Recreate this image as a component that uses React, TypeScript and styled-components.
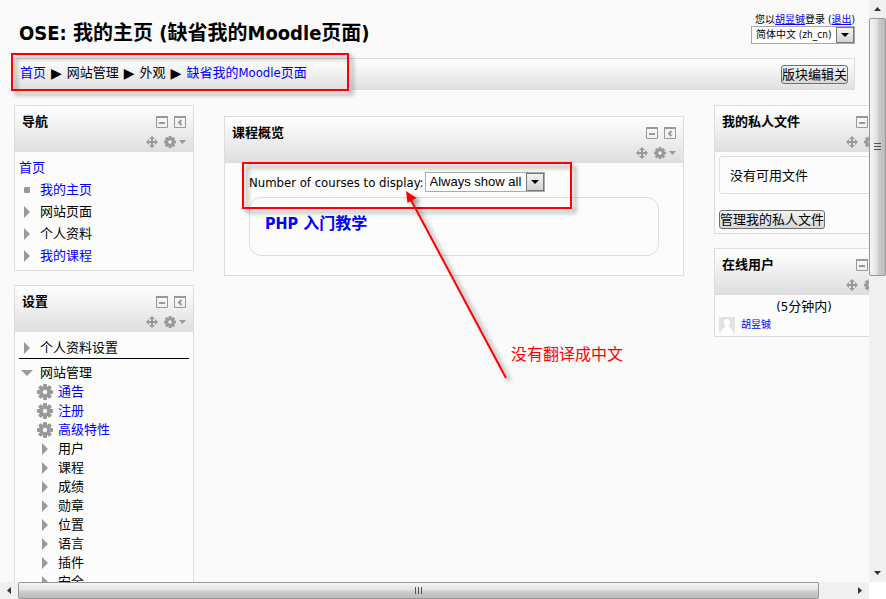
import React from "react";
import styled, { createGlobalStyle } from "styled-components";

const GlobalStyle = createGlobalStyle`
  * { box-sizing: border-box; }
  body { margin: 0; overflow: hidden; }
  body, button, select {
    font-family: "DejaVu Sans Condensed", "Noto Sans CJK SC", sans-serif;
    font-size: 13px;
    color: #000;
  }
  h1, h2, h3, p, ul { margin: 0; padding: 0; }
  ul { list-style: none; }
  svg { display: block; flex: none; }
`;

const LINK = "#0000ff";
const LINE = "#dddddd";
const ICON = "#999999";
const RED = "#ff0000";

const Frame = styled.div`
  display: grid;
  grid-template-columns: minmax(0, 1fr) 17px;
  grid-template-rows: minmax(0, 1fr) 17px;
  height: 100vh;
  background: #fff;
`;

const Viewport = styled.div`
  position: relative;
  overflow: hidden;
  background: #fafafa;
`;

const Page = styled.div`
  padding: 14px 14px 0;
`;

const Header = styled.header`
  display: flex;
  justify-content: space-between;
  align-items: flex-start;
  height: 44px;
`;

const Title = styled.h1`
  padding: 5px 0 0 5px;
  font-size: 20px;
  line-height: 28px;
  white-space: nowrap;
`;

const Account = styled.div`
  display: flex;
  flex-direction: column;
  align-items: flex-end;
  font-size: 10px;
  line-height: 12px;
`;

const Link = styled.a<{ $plain?: boolean }>`
  color: ${LINK};
  text-decoration: ${(p) => (p.$plain ? "none" : "underline")};
`;

const SelectShell = styled.span<{ $small?: boolean }>`
  display: grid;
  grid-template-columns: minmax(0, 1fr) 18px;
  width: ${(p) => (p.$small ? "104px" : "120px")};
  height: ${(p) => (p.$small ? "18px" : "20px")};
  border: 1px solid #aaa;
  background: #fff;
`;

const Select = styled.select<{ $small?: boolean }>`
  grid-area: 1 / 1 / 2 / 3;
  appearance: none;
  width: 100%;
  height: 100%;
  border: 0;
  padding: 0 0 0 4px;
  outline: 0;
  background: transparent;
  font-family: ${(p) =>
    p.$small
      ? `"DejaVu Sans Condensed", "Noto Sans CJK SC", sans-serif`
      : `"Liberation Sans", sans-serif`};
  font-size: ${(p) => (p.$small ? "10px" : "13px")};
  line-height: 16px;
`;

const SelectArrow = styled.span`
  grid-area: 1 / 2 / 2 / 3;
  display: flex;
  align-items: center;
  justify-content: center;
  border: 1px solid #777;
  background: linear-gradient(#f4f4f4, #d4d4d4);
  pointer-events: none;
`;

const NavBar = styled.nav`
  display: flex;
  align-items: center;
  justify-content: space-between;
  height: 32px;
  padding: 0 6px 0 5px;
  border: 1px solid ${LINE};
  background: linear-gradient(#fff, #e0e0e0);
`;

const Crumbs = styled.div`
  display: flex;
  align-items: center;
  gap: 5px;
  line-height: 26px;
  padding-bottom: 2px;
  white-space: nowrap;
`;

const CrumbArrow = styled.span`
  font-family: "DejaVu Sans", sans-serif;
  font-size: 14px;
`;

const Button = styled.button`
  height: 19px;
  padding: 0;
  border: 1px solid #707070;
  border-radius: 3px;
  background: linear-gradient(#f3f3f3, #d8d8d8);
  line-height: 17px;
`;

const Columns = styled.div`
  display: flex;
  align-items: flex-start;
  gap: 30px;
  margin: 15px -39px 0 0;
`;

const Side = styled.aside`
  flex: 0 0 180px;
  display: flex;
  flex-direction: column;
  gap: 14px;
`;

const Main = styled.main`
  flex: 1;
  min-width: 0;
  padding-top: 11px;
`;

const BlockBox = styled.section`
  border: 1px solid ${LINE};
  background: #fcfcfc;
`;

const BlockHead = styled.div`
  display: grid;
  grid-template-columns: 1fr auto;
  grid-template-rows: 20px 20px;
  align-items: center;
  height: 46px;
  padding: 6px 7px 0;
  background: linear-gradient(#fff, #dedede);
`;

const BlockTitle = styled.h2`
  font-size: 13px;
  line-height: 20px;
`;

const IconRow = styled.div`
  display: flex;
  align-items: center;
  justify-content: flex-end;
  gap: 6px;
  grid-column: 2;
`;

const BlockBody = styled.div`
  padding: 4px;
`;

const Tree = styled.ul<{ $tight?: boolean }>`
  line-height: ${(p) => (p.$tight ? "19px" : "22px")};
`;

const NavTree = styled(Tree)`
  padding-top: 1px;
  margin-bottom: -1px;
`;

const TreeRow = styled.li<{ $level?: number }>`
  display: flex;
  align-items: center;
  padding-left: ${(p) => (p.$level === 2 ? "18px" : "0")};
`;

const Marker = styled.span<{ $level?: number }>`
  display: flex;
  justify-content: center;
  flex: none;
  width: ${(p) => (p.$level === 2 ? "16px" : "16px")};
  margin-right: 5px;
`;

const Rule = styled.hr`
  height: 1px;
  margin: 0 0 4px;
  border: 0;
  background: #000;
`;

const Overview = styled.div`
  padding: 9px 24px 19px;
`;

const DisplayCount = styled.label`
  display: flex;
  align-items: center;
  gap: 1px;
  height: 20px;
  white-space: nowrap;
`;

const Course = styled.div`
  height: 59px;
  margin-top: 5px;
  padding: 14px 15px;
  border: 1px solid ${LINE};
  border-radius: 12px;
`;

const CourseTitle = styled.h3`
  font-size: 16px;
  line-height: 24px;
`;

const FileBox = styled.div`
  height: 38px;
  margin-bottom: 16px;
  padding: 0 10px;
  border: 1px solid ${LINE};
  border-radius: 3px;
  line-height: 38px;
`;

const OnlineBody = styled.div`
  padding: 3px 4px;
`;

const Since = styled.p`
  line-height: 18px;
  text-align: center;
`;

const User = styled.div`
  display: flex;
  align-items: center;
  gap: 6px;
  height: 17px;
  font-size: 10px;
  line-height: 16px;
`;

const Track = styled.div<{ $vertical?: boolean }>`
  display: flex;
  flex-direction: ${(p) => (p.$vertical ? "column" : "row")};
  background: #f0f0f0;
`;

const TrackEnd = styled.button`
  display: flex;
  align-items: center;
  justify-content: center;
  flex: 0 0 18px;
  padding: 0;
  border: 0;
  background: transparent;
`;

const Thumb = styled.div<{ $vertical?: boolean; $share: number }>`
  display: flex;
  align-items: center;
  justify-content: center;
  flex: ${(p) => p.$share} 0 0;
  border: 1px solid #979797;
  border-radius: 2px;
  background: linear-gradient(
    ${(p) => (p.$vertical ? "to right" : "to bottom")},
    #f5f5f5, #e2e2e4 45%, #cacacc 60%, #bcbcbe
  );
`;

const TrackRest = styled.div<{ $share: number }>`
  flex: ${(p) => p.$share} 0 0;
`;

const Callout = styled.div<{ $x: number; $y: number; $w: number; $h: number }>`
  position: absolute;
  left: ${(p) => p.$x}px;
  top: ${(p) => p.$y}px;
  width: ${(p) => p.$w}px;
  height: ${(p) => p.$h}px;
  border: 2px solid ${RED};
  filter: drop-shadow(4px 4px 2px rgba(0, 0, 0, 0.4));
  pointer-events: none;
`;

const ArrowLayer = styled.svg`
  position: absolute;
  left: 400px;
  top: 185px;
  filter: drop-shadow(4px 3px 2px rgba(0, 0, 0, 0.4));
  pointer-events: none;
`;

const Note = styled.p`
  position: absolute;
  left: 511px;
  top: 343px;
  color: ${RED};
  font-size: 16px;
  line-height: 24px;
`;

type Dir = "up" | "down" | "left" | "right";

const triangles: Record<Dir, [number, number, string]> = {
  up: [7, 4, "M0 4 3.5 0 7 4Z"],
  down: [7, 4, "M0 0H7L3.5 4Z"],
  left: [4, 7, "M4 0V7L0 3.5Z"],
  right: [4, 7, "M0 0V7L4 3.5Z"],
};

const Triangle = ({ dir }: { dir: Dir }) => {
  const [w, h, d] = triangles[dir];
  return (
    <svg width={w} height={h} viewBox={`0 0 ${w} ${h}`}>
      <path d={d} fill="#333" />
    </svg>
  );
};

const SelectTriangle = () => (
  <svg width="8" height="4" viewBox="0 0 8 4">
    <path d="M0 0H8L4 4Z" fill="#000" />
  </svg>
);

const Grip = ({ vertical }: { vertical?: boolean }) => (
  <svg width="8" height="8" viewBox="0 0 8 8">
    <path
      d={vertical ? "M0 .5H7M0 3.5H7M0 6.5H7" : "M.5 0V7M3.5 0V7M6.5 0V7"}
      stroke="#555"
    />
  </svg>
);

const Expand = () => (
  <svg width="6" height="12" viewBox="0 0 6 12">
    <path d="M0 0 6 6 0 12Z" fill={ICON} />
  </svg>
);

const Expanded = () => (
  <svg width="12" height="6" viewBox="0 0 12 6">
    <path d="M0 0H12L6 6Z" fill={ICON} />
  </svg>
);

const Dot = () => (
  <svg width="6" height="6" viewBox="0 0 6 6">
    <rect width="6" height="6" rx="1" fill={ICON} />
  </svg>
);

const Gear = ({ size }: { size: number }) => (
  <svg width={size} height={size} viewBox="-8 -8 16 16">
    <g fill={ICON}>
      {[0, 45, 90, 135].map((a) => (
        <rect key={a} x="-2" y="-8" width="4" height="16" rx="1" transform={`rotate(${a})`} />
      ))}
      <circle r="5.8" />
    </g>
    <circle r="2.2" fill="#f7f7f7" />
  </svg>
);

const Collapse = () => (
  <svg width="12" height="12" viewBox="0 0 12 12">
    <path d="M.5 1V11.5H11.5V1" fill="none" stroke={ICON} />
    <path d="M0 0H12V2H0ZM3 6H9V8H3Z" fill={ICON} />
  </svg>
);

const Dock = () => (
  <svg width="12" height="12" viewBox="0 0 12 12">
    <path d="M.5 1V11.5H11.5V1" fill="none" stroke={ICON} />
    <path d="M0 0H12V2H0Z" fill={ICON} />
    <path d="M7.5 4 5 6.5 7.5 9" fill="none" stroke={ICON} strokeWidth="2" />
  </svg>
);

const Move = () => (
  <svg width="12" height="12" viewBox="0 0 12 12">
    <path
      d="M6 0 9 3H7V5H9V3L12 6 9 9V7H7V9H9L6 12 3 9H5V7H3V9L0 6 3 3V5H5V3H3Z"
      fill={ICON}
    />
  </svg>
);

const GearMenu = styled.span`
  display: flex;
  align-items: center;
  gap: 3px;
`;

const Avatar = () => (
  <svg width="16" height="16" viewBox="0 0 16 16">
    <rect width="16" height="16" fill="#e2e2e2" />
    <path
      d="M8 2C5.5 2 4.5 4 5 6.2 5.3 7.5 6 8.5 6.5 9 6.5 11 2 11.5 1.5 16H14.5C14 11.5 9.5 11 9.5 9 10 8.5 10.7 7.5 11 6.2 11.5 4 10.5 2 8 2Z"
      fill="#fff"
    />
  </svg>
);

const Block = ({ title, children }: { title: string; children: React.ReactNode }) => (
  <BlockBox>
    <BlockHead>
      <BlockTitle>{title}</BlockTitle>
      <IconRow>
        <Collapse />
        <Dock />
      </IconRow>
      <IconRow>
        <Move />
        <GearMenu>
          <Gear size={12} />
          <svg width="7" height="4" viewBox="0 0 7 4">
            <path d="M0 0H7L3.5 4Z" fill={ICON} />
          </svg>
        </GearMenu>
      </IconRow>
    </BlockHead>
    {children}
  </BlockBox>
);

const Item = ({
  icon,
  text,
  link,
  level,
}: {
  icon: React.ReactNode;
  text: string;
  link?: boolean;
  level?: number;
}) => (
  <TreeRow $level={level}>
    <Marker>{icon}</Marker>
    {link ? <Link $plain href="#">{text}</Link> : text}
  </TreeRow>
);

const Bar = ({ vertical, thumb, rest }: { vertical?: boolean; thumb: number; rest: number }) => (
  <Track $vertical={vertical}>
    <TrackEnd aria-label={vertical ? "向上" : "向左"}>
      <Triangle dir={vertical ? "up" : "left"} />
    </TrackEnd>
    <Thumb $vertical={vertical} $share={thumb}>
      <Grip vertical={vertical} />
    </Thumb>
    <TrackRest $share={rest} />
    <TrackEnd aria-label={vertical ? "向下" : "向右"}>
      <Triangle dir={vertical ? "down" : "right"} />
    </TrackEnd>
  </Track>
);

const sections = ["用户", "课程", "成绩", "勋章", "位置", "语言", "插件", "安全"];

export default function App() {
  return (
    <>
      <GlobalStyle />
      <Frame>
        <Viewport>
          <Page>
            <Header>
              <Title>OSE: 我的主页 (缺省我的Moodle页面)</Title>
              <Account>
                <span>
                  您以<Link href="#">胡昱铖</Link>登录 (<Link href="#">退出</Link>)
                </span>
                <SelectShell $small>
                  <Select $small aria-label="语言">
                    <option>简体中文 (zh_cn)</option>
                  </Select>
                  <SelectArrow>
                    <SelectTriangle />
                  </SelectArrow>
                </SelectShell>
              </Account>
            </Header>
            <NavBar>
              <Crumbs>
                <Link $plain href="#">首页</Link>
                <CrumbArrow>▶</CrumbArrow>
                <span>网站管理</span>
                <CrumbArrow>▶</CrumbArrow>
                <span>外观</span>
                <CrumbArrow>▶</CrumbArrow>
                <Link $plain href="#">缺省我的Moodle页面</Link>
              </Crumbs>
              <Button>版块编辑关</Button>
            </NavBar>
            <Columns>
              <Side>
                <Block title="导航">
                  <BlockBody>
                    <NavTree>
                      <TreeRow><Link $plain href="#">首页</Link></TreeRow>
                      <Item icon={<Dot />} text="我的主页" link />
                      <Item icon={<Expand />} text="网站页面" />
                      <Item icon={<Expand />} text="个人资料" />
                      <Item icon={<Expand />} text="我的课程" link />
                    </NavTree>
                  </BlockBody>
                </Block>
                <Block title="设置">
                  <BlockBody>
                    <NavTree>
                      <Item icon={<Expand />} text="个人资料设置" />
                    </NavTree>
                    <Rule />
                    <Tree $tight>
                      <Item icon={<Expanded />} text="网站管理" />
                      {["通告", "注册", "高级特性"].map((t) => (
                        <Item key={t} icon={<Gear size={16} />} text={t} link level={2} />
                      ))}
                      {sections.map((t) => (
                        <Item key={t} icon={<Expand />} text={t} level={2} />
                      ))}
                    </Tree>
                  </BlockBody>
                </Block>
              </Side>
              <Main>
                <Block title="课程概览">
                  <Overview>
                    <DisplayCount>
                      Number of courses to display:
                      <SelectShell>
                        <Select>
                          <option>Always show all</option>
                        </Select>
                        <SelectArrow>
                          <SelectTriangle />
                        </SelectArrow>
                      </SelectShell>
                    </DisplayCount>
                    <Course>
                      <CourseTitle>
                        <Link $plain href="#">PHP 入门教学</Link>
                      </CourseTitle>
                    </Course>
                  </Overview>
                </Block>
              </Main>
              <Side>
                <Block title="我的私人文件">
                  <BlockBody>
                    <FileBox>没有可用文件</FileBox>
                    <Button>管理我的私人文件</Button>
                  </BlockBody>
                </Block>
                <Block title="在线用户">
                  <OnlineBody>
                    <Since>(5分钟内)</Since>
                    <User>
                      <Avatar />
                      <Link $plain href="#">胡昱铖</Link>
                    </User>
                  </OnlineBody>
                </Block>
              </Side>
            </Columns>
          </Page>
          <Callout $x={11} $y={53} $w={338} $h={38} />
          <Callout $x={242} $y={162} $w={330} $h={47} />
          <ArrowLayer width="120" height="205" viewBox="0 0 120 205">
            <path d="M11 15 106 193" stroke={RED} strokeWidth="2" />
            <path d="M6 6 16.5 13 7.5 18Z" fill={RED} />
          </ArrowLayer>
          <Note>没有翻译成中文</Note>
        </Viewport>
        <Bar vertical thumb={257} rest={289} />
        <Bar thumb={801} rest={32} />
      </Frame>
    </>
  );
}
